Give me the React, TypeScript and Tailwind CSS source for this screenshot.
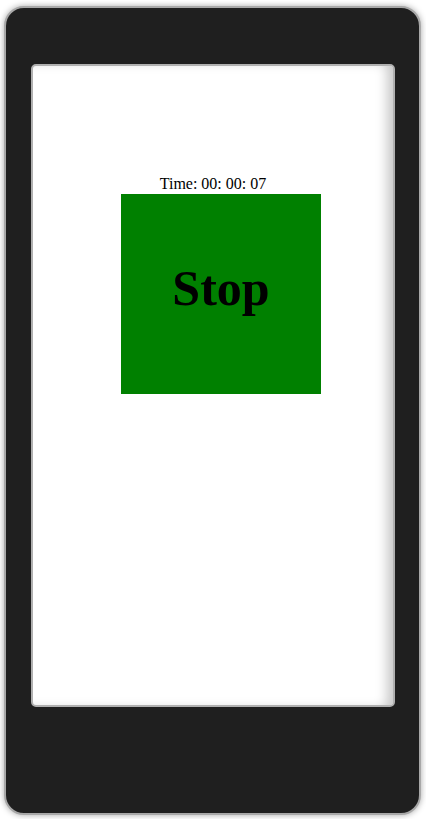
import React from "react";

const App = () => {
  return (
    <div className="w-[426px] h-[819px] bg-white overflow-hidden font-['Liberation_Serif',serif] text-black">
      {/* PHONE FRAME */}
      <div className="ml-[4px] mt-[6px] w-[417px] h-[809px] rounded-[20px] border-2 border-[#a8a8a8] bg-[#1f1f1f] shadow-[0_0_6px_rgba(0,0,0,0.35)] pt-[56px] pl-[25px]">
        {/* SCREEN */}
        <div className="w-[364px] h-[643px] rounded-[5px] border-2 border-[#b0b0b0] bg-white shadow-[inset_-10px_0_12px_-4px_rgba(0,0,0,0.22)] pt-[108px]">
          <p className="text-center text-[16px] leading-[20px]">Time: 00: 00: 07</p>
          <div className="ml-[88px] w-[200px] h-[200px] bg-[#008000] flex items-center justify-center">
            <span className="text-[50px] font-bold leading-[56px] -mt-[12px]">Stop</span>
          </div>
        </div>
      </div>
    </div>
  );
};

export default App;
